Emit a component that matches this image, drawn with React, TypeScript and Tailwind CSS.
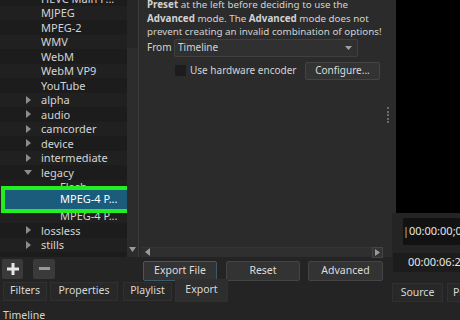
import { ReactNode } from "react";

type Row = { label: string; level: 0 | 1 | 2; arrow?: "right" | "down" };

const rows: Row[] = [
  { label: "HEVC Main P...", level: 1 },
  { label: "MJPEG", level: 1 },
  { label: "MPEG-2", level: 1 },
  { label: "WMV", level: 1 },
  { label: "WebM", level: 1 },
  { label: "WebM VP9", level: 1 },
  { label: "YouTube", level: 1 },
  { label: "alpha", level: 0, arrow: "right" },
  { label: "audio", level: 0, arrow: "right" },
  { label: "camcorder", level: 0, arrow: "right" },
  { label: "device", level: 0, arrow: "right" },
  { label: "intermediate", level: 0, arrow: "right" },
  { label: "legacy", level: 0, arrow: "down" },
  { label: "Flash", level: 2 },
  { label: "MPEG-4 P...", level: 2 },
  { label: "MPEG-4 P...", level: 2 },
  { label: "lossless", level: 0, arrow: "right" },
  { label: "stills", level: 0, arrow: "right" },
];

const Arrow = ({ dir }: { dir: "right" | "down" }) => (
  <svg width="8" height="8" viewBox="0 0 8 8" className="shrink-0">
    {dir === "right" ? (
      <path d="M2 0 L7 4 L2 8 Z" fill="#8c8c8c" />
    ) : (
      <path d="M0 2 L8 2 L4 7 Z" fill="#8c8c8c" />
    )}
  </svg>
);

const Btn = ({ children, className }: { children: ReactNode; className: string }) => (
  <div
    className={`flex items-center justify-center rounded-[2px] border border-[#444444] bg-[#333333] text-[10.5px] text-[#dcdcdc] ${className}`}
  >
    {children}
  </div>
);

const Tab = ({ children, className }: { children: ReactNode; className: string }) => (
  <div
    className={`flex items-center justify-center border border-[#303030] bg-[#282828] text-[10.5px] text-[#d8d8d8] ${className}`}
  >
    {children}
  </div>
);

export default function App() {
  return (
    <div
      className="flex h-[320px] w-[460px] overflow-hidden bg-[#242424] text-[#d4d4d4]"
      style={{ fontFamily: '"Noto Sans", "Liberation Sans", sans-serif' }}
    >
      {/* main area */}
      <div className="flex w-[392px] flex-col">
        <div className="flex h-[258px]">
          {/* preset tree */}
          <div className="relative h-full w-[127px] overflow-hidden bg-[#1c1c1c]">
            <div className="mt-[-9px] flex flex-col">
              {rows.map((r, i) => (
                <div
                  key={i}
                  className={`flex h-[14.5px] items-center text-[11px] leading-none ${
                    i % 2 ? "bg-[#202020]" : "bg-[#1c1c1c]"
                  }`}
                >
                  {r.level === 0 && (
                    <div className="flex w-[41px] justify-start pl-[24px]">
                      <Arrow dir={r.arrow!} />
                    </div>
                  )}
                  {r.level === 1 && <div className="w-[41px]" />}
                  {r.level === 2 && <div className="w-[60px]" />}
                  <span className="whitespace-nowrap">{r.label}</span>
                </div>
              ))}
            </div>
            {/* selected row highlight */}
            <div className="absolute left-[1px] top-[186px] flex h-[27px] w-[131px] items-center border-4 border-[#22ee22] bg-[#1b5c7d] pl-[55px] text-[11px] text-white">
              MPEG-4 P...
            </div>
          </div>
          {/* vertical scrollbar */}
          <div className="flex w-[11px] flex-col bg-[#2c2c2c]">
            <div className="h-[48px] bg-[#262626]" />
            <div className="flex-1" />
            <div className="mb-[3px] flex h-[8px] items-center justify-center">
              <svg width="7" height="5" viewBox="0 0 7 5">
                <path d="M0 0 L7 0 L3.5 5 Z" fill="#9a9a9a" />
              </svg>
            </div>
          </div>
          <div className="w-[1px] bg-[#3a3a3a]" />
          {/* export settings */}
          <div className="relative flex flex-1 flex-col bg-[#2b2b2b] pl-[8px] text-[10px]">
            <p className="mt-[-2px] text-[9.8px] leading-[13.5px] text-[#d2d2d2]">
              <b>Preset</b> at the left before deciding to use the
              <br />
              <b>Advanced</b> mode. The <b>Advanced</b> mode does not
              <br />
              prevent creating an invalid combination of options!
            </p>
            <div className="flex h-[18px] items-center">
              <span className="w-[27px]">From</span>
              <div className="flex h-[18px] w-[184px] items-center justify-between rounded-[2px] border border-[#3f3f3f] bg-[#303030] pl-[3px] pr-[5px]">
                <span>Timeline</span>
                <svg width="7" height="4" viewBox="0 0 7 4">
                  <path d="M0 0 L7 0 L3.5 4 Z" fill="#a0a0a0" />
                </svg>
              </div>
            </div>
            <div className="mt-[5px] flex h-[18px] items-center">
              <div className="ml-[28px] h-[11px] w-[11px] bg-[#1c1c1c]" />
              <span className="ml-[4px] w-[115px] whitespace-nowrap">Use hardware encoder</span>
              <Btn className="h-[18px] w-[75px] text-[10px]">Configure...</Btn>
            </div>
            <div className="flex-1" />
            {/* horizontal scrollbar */}
            <div className="mb-0 ml-[-5px] mr-[9px] flex h-[10px] items-center justify-between border-t border-[#363636] bg-[#2f2f2f]">
              <svg width="8" height="8" viewBox="0 0 8 8" className="ml-[2px]">
                <path d="M6 0 L1 4 L6 8 Z" fill="#9a9a9a" />
              </svg>
              <div className="flex h-[11px] w-[11px] items-center justify-center border border-[#444444] bg-[#333333]">
                <svg width="5" height="7" viewBox="0 0 5 7">
                  <path d="M0 0 L5 3.5 L0 7 Z" fill="#9a9a9a" />
                </svg>
              </div>
            </div>
            {/* splitter handle */}
            <div className="absolute right-[3px] top-[107px] flex flex-col gap-[1.5px]">
              {[0, 1, 2, 3, 4].map((d) => (
                <div key={d} className="h-[2px] w-[2px] bg-[#6a6a6a]" />
              ))}
            </div>
          </div>
        </div>
        {/* buttons row */}
        <div className="flex h-[22px] items-start">
          <div className="ml-[2px] mt-[2px] flex h-[20px] w-[21px] items-center justify-center rounded-[2px] bg-[#3a3a3a]">
            <svg width="12" height="12" viewBox="0 0 12 12">
              <path d="M4.5 0 H7.5 V4.5 H12 V7.5 H7.5 V12 H4.5 V7.5 H0 V4.5 H4.5 Z" fill="#e6e6e6" />
            </svg>
          </div>
          <div className="ml-[10px] mt-[2px] flex h-[20px] w-[22px] items-center justify-center rounded-[2px] bg-[#3a3a3a]">
            <div className="h-[3px] w-[11px] bg-[#9a9a9a]" />
          </div>
          <Btn className="ml-[88px] mt-[4px] h-[20px] w-[74px] !border-[#3b5a6c]">Export File</Btn>
          <Btn className="ml-[9px] mt-[4px] h-[20px] w-[74px]">Reset</Btn>
          <Btn className="ml-[8px] mt-[4px] h-[20px] w-[75px]">Advanced</Btn>
        </div>
        {/* tabs row */}
        <div className="flex h-[23px] items-start">
          <Tab className="ml-[3px] mt-[3px] h-[19px] w-[44px]">Filters</Tab>
          <Tab className="ml-[3px] mt-[3px] h-[19px] w-[68px]">Properties</Tab>
          <Tab className="ml-[5px] mt-[3px] h-[19px] w-[49px]">Playlist</Tab>
          <Tab className="ml-[3px] h-[23px] w-[53px] !bg-[#2e2e2e]">Export</Tab>
        </div>
        <div className="ml-[3px] mt-[8px] text-[10.5px] leading-none text-[#d4d4d4]">Timeline</div>
      </div>
      {/* right: player */}
      <div className="flex w-[68px] flex-col">
        <div className="h-[213px] bg-[#2b2b2b] pl-[4px]">
          <div className="h-full bg-black" />
        </div>
        <div className="ml-[11px] mt-[5px] flex h-[27px] items-center bg-[#121212] text-[11px] text-[#e6e6e6]">
          <span className="whitespace-nowrap">
            <span className="font-light text-white">|</span>00:00:00;00
          </span>
        </div>
        <div className="ml-[1px] mt-[8px] flex h-[19px] items-center bg-[#1c1c1c] pl-[15px] text-[11px] text-[#e6e6e6]">
          <span className="whitespace-nowrap">00:00:06:20</span>
        </div>
        <div className="mt-[11px] flex">
          <Tab className="h-[19px] w-[51px] shrink-0">Source</Tab>
          <Tab className="ml-[4px] h-[19px] w-[40px] shrink-0 !justify-start pl-[5px]">Project</Tab>
        </div>
      </div>
    </div>
  );
}
